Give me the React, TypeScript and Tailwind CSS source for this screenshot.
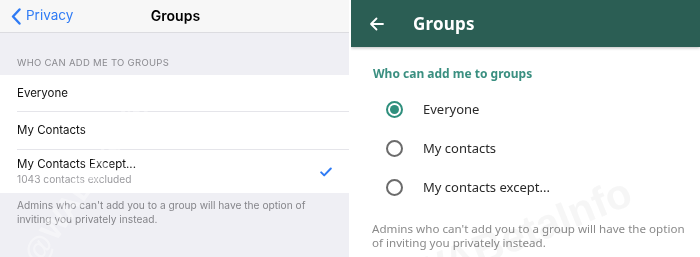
import React from 'react';

function IosPanel() {
  return (
    <div className="relative w-[349px] h-full bg-[#efeff4] overflow-hidden" style={{ fontFamily: 'Inter, "Liberation Sans", sans-serif' }}>
      {/* Nav bar */}
      <div className="relative h-[33px] bg-[#f7f7f7] border-b border-[#dcdce0] flex items-center">
        <div className="flex items-center pl-[11px] text-[#2f7bf5]">
          <svg width="10" height="17" viewBox="0 0 10 17" fill="none">
            <path d="M8.5 1.5L2 8.5l6.5 7" stroke="#2f7bf5" strokeWidth="2.4" strokeLinecap="round" strokeLinejoin="round" />
          </svg>
          <span className="ml-[5px] text-[13.5px] leading-none">Privacy</span>
        </div>
        <span className="absolute left-0 right-0 text-center text-[14px] font-semibold text-black leading-none pl-[2px]">Groups</span>
      </div>

      <div className="h-[42px] flex items-end pb-[5px] pl-[17px] text-[9.5px] tracking-[0.3px] text-[#8a8a8f]">
        WHO CAN ADD ME TO GROUPS
      </div>

      <div className="bg-white">
        <div className="h-[37px] flex items-center pl-[17px]">
          <div className="flex-1 h-full flex items-center pt-[1px] border-b border-[#e5e5ea] text-[11.5px] text-[#111]">Everyone</div>
        </div>
        <div className="h-[38px] flex items-center pl-[17px]">
          <div className="flex-1 h-full flex items-center pt-[1px] border-b border-[#e5e5ea] text-[11.5px] text-[#111]">My Contacts</div>
        </div>
        <div className="h-[43px] flex items-center pl-[17px] pr-[17px]">
          <div className="flex-1 flex flex-col">
            <span className="text-[11.5px] text-[#111] leading-[16px]">My Contacts Except...</span>
            <span className="text-[10.2px] text-[#9a9a9e] leading-[15px]">1043 contacts excluded</span>
          </div>
          <svg width="12" height="10" viewBox="0 0 12 10" fill="none">
            <path d="M1.2 5.4l3 3L10.8 1.5" stroke="#2f7bf5" strokeWidth="2" strokeLinecap="round" strokeLinejoin="round" />
          </svg>
        </div>
      </div>

      <p className="pt-[5px] pl-[17px] pr-[20px] text-[10.2px] leading-[14px] text-[#85858a]">
        Admins who can't add you to a group will have the option of inviting you privately instead.
      </p>

      <div className="absolute left-[30px] top-[238px] -rotate-[55deg] origin-left text-[30px] font-bold text-white/40 pointer-events-none select-none" style={{ fontFamily: '"Liberation Sans", sans-serif' }}>
        @WABetaInfo
      </div>
    </div>
  );
}

function Radio({ checked }: { checked?: boolean }) {
  return (
    <div className={`w-[17px] h-[17px] rounded-full border-2 flex items-center justify-center ${checked ? 'border-[#2f8f7d]' : 'border-[#6b6b6b]'}`}>
      {checked && <div className="w-[9px] h-[9px] rounded-full bg-[#2f8f7d]" />}
    </div>
  );
}

function AndroidPanel() {
  const options = [
    { label: 'Everyone', checked: true },
    { label: 'My contacts' },
    { label: 'My contacts except...' },
  ];
  return (
    <div className="relative flex-1 h-full bg-white overflow-hidden" style={{ fontFamily: '"Noto Sans", "Open Sans", sans-serif' }}>
      <div className="h-[47px] bg-[#2b5e54] flex items-center shadow-[0_1px_3px_rgba(0,0,0,0.25)]">
        <svg className="ml-[18px]" width="15" height="14" viewBox="0 0 15 14" fill="none">
          <path d="M14 7H2M7.5 1.5L2 7l5.5 5.5" stroke="white" strokeWidth="1.8" strokeLinecap="round" strokeLinejoin="round" />
        </svg>
        <span className="ml-[29px] text-[17px] font-bold text-white tracking-[0.2px]">Groups</span>
      </div>

      <div className="pt-[18px] pl-[22px] text-[12px] font-bold text-[#3a8f80] leading-[18px]">Who can add me to groups</div>

      <div className="mt-[7px] flex flex-col">
        {options.map((o) => (
          <div key={o.label} className="h-[39px] flex items-center pl-[35px]">
            <Radio checked={o.checked} />
            <span className="ml-[20px] text-[13px] text-[#2a2a2a]">{o.label}</span>
          </div>
        ))}
      </div>

      <p className="mt-[15px] pl-[21px] pr-[12px] text-[11.6px] leading-[14px] text-[#8a8a8a]">
        Admins who can't add you to a group will have the option of inviting you privately instead.
      </p>

      <div className="absolute left-[22px] top-[262px] -rotate-[22deg] origin-left text-[42px] font-bold text-[#f3f3f3] pointer-events-none select-none mix-blend-multiply opacity-70" style={{ fontFamily: '"Liberation Sans", sans-serif' }}>
        @WABetaInfo
      </div>
    </div>
  );
}

export default function App() {
  return (
    <div className="w-[700px] h-[257px] flex gap-[2px] bg-white overflow-hidden">
      <IosPanel />
      <AndroidPanel />
    </div>
  );
}
